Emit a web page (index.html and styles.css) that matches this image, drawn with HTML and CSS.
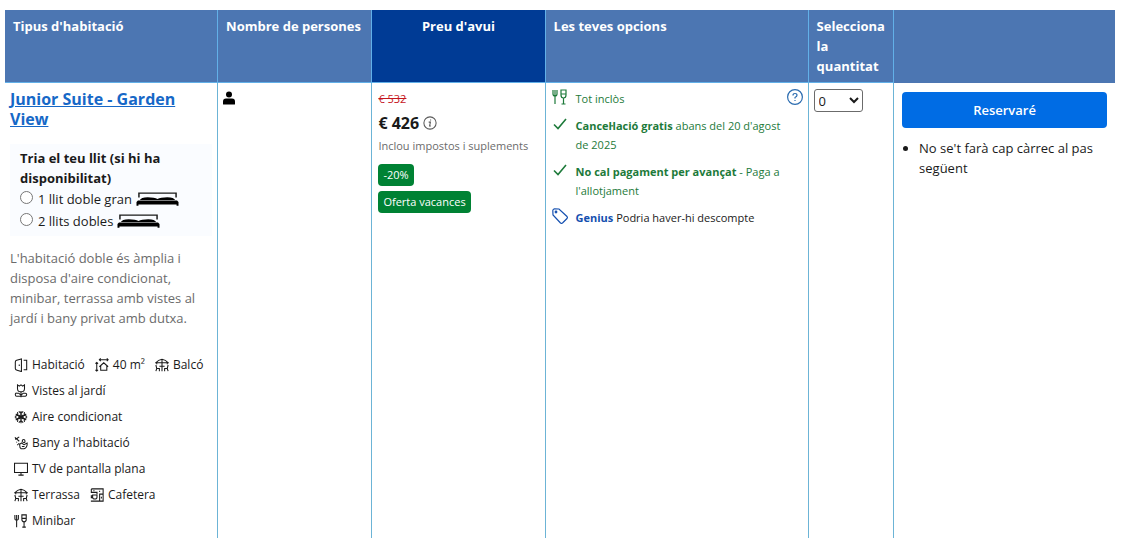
FILE: index.html
```html
<!DOCTYPE html>
<html lang="ca">
<head>
    <meta charset="UTF-8">
    <meta name="viewport" content="width=device-width, initial-scale=1.0">
    <title>Disponibilitat</title>
    <link rel="stylesheet" href="styles.css">
</head>
<body>
    <svg class="sprite" aria-hidden="true">
        <symbol id="person" viewBox="0 0 12 14">
            <circle cx="6" cy="3.5" r="3"/>
            <path d="M0 13v-2.500q0-3 3-3h6q3 0 3 3V13q0 .5-.5.5h-11Q0 13.500 0 13z"/>
        </symbol>
        <symbol id="bed" viewBox="0 0 44 16">
            <path d="M3 6.500V2h38v4.500" fill="none" stroke="currentColor" stroke-width="1.500"/>
            <path d="M4 9q1-2.500 8-2.800 7 0 10 1.800 3-1.800 10-1.800 7 .3 8 2.800z"/>
            <path d="M2 9.500h40l1.500 1.500v4h-2v-1.500h-39V15h-2v-4z"/>
        </symbol>
        <symbol id="door" viewBox="0 0 16 16">
            <path d="M8.500 1v14.500l-5-1.500Q1.500 13.500 1.500 12V4.500Q1.500 3 3 2.500zM11 2.500h3.500v11H11M6 7.500v1.500"/>
        </symbol>
        <symbol id="size" viewBox="0 0 16 16">
            <path d="M5 2h10M6.500.5L5 2l1.500 1.500M13.500.5L15 2l-1.500 1.500M2 5v10M.5 6.500L2 5l1.500 1.500M.5 13.500L2 15l1.500-1.500M5 10l5-4.500 5 4.500M6.500 9v5h7V9"/>
        </symbol>
        <symbol id="terrace" viewBox="0 0 16 16">
            <path d="M.8 5.500Q4 2 8 1.500q4 .5 7.200 4zM2 5.500V7M14 5.500V7M8 1v14M5 9.500h6M1 8l1 4h3v3M2 12l-1 3M15 8l-1 4h-3v3M14 12l1 3"/>
        </symbol>
        <symbol id="flower" viewBox="0 0 16 16">
            <path d="M4 1l2 1.500L8 1l2 1.500L12 1v4.500Q12 9 8 9T4 5.500zM8 9v6M3 10.500h2.500L8 13l2.500-2.500H13q1.500 0 1.500 1.500T13 14H3q-1.500 0-1.500-2T3 10.500z"/>
        </symbol>
        <symbol id="snow" viewBox="0 0 16 16">
            <path d="M8 1v14M2 4.500l12 7M14 4.500l-12 7M5.500 1.500L8 4l2.500-2.500M5.500 14.500L8 12l2.500 2.500M1 7.500L4.500 6 4 2.500M15 7.500L11.500 6l.5-3.500M1 8.500L4.500 10 4 13.500M15 8.500L11.500 10l.5 3.500M8 5.500l2.500 1.200v2.600L8 10.500 5.500 9.300V6.700z"/>
        </symbol>
        <symbol id="bath" viewBox="0 0 16 16">
            <path d="M1 1.500l5 4.500M6 1L1.500 4M3 6.500v1M5.500 8v2M4 9.500v1M6.500 10.500q0-2 2-2.500l3 2 3.500-2q.5 5-3.500 6.500H8q-1.500-1-1.500-4zM9.500 7.500V5.500q0-1.500 1.500-1.500t1.500 1.500V7q-1 1-2 0M9 12h3"/>
        </symbol>
        <symbol id="tv" viewBox="0 0 16 16">
            <path d="M.6 1.500h14.800v10.500H.6zM5 15h6M8 12v3"/>
        </symbol>
        <symbol id="coffee" viewBox="0 0 16 16">
            <path d="M1.500 1H15v14H1M11 15V7h4M1.500 1v4H8v2M4 3h1M3 8h5v2.500Q8 12.500 5.500 12.500T3 10.500zM3 9H1.500v2H3M11 3v1.500M13 10v2"/>
        </symbol>
        <symbol id="food" viewBox="0 0 16 16">
            <path d="M1 1v4q0 2 2 2t2-2V1M3 1v14M9 1h5v5q0 3-2.500 3T9 6zM9 5h5M11.500 9v6M9.500 15h4"/>
        </symbol>
        <symbol id="check" viewBox="0 0 16 16">
            <path d="M2 8.500L6 12.500 14 3"/>
        </symbol>
        <symbol id="tag" viewBox="0 0 16 16">
            <path d="M.8 2.500Q1 1 2.500.8L7 1l8 7.500q.8 1 0 2L10.500 15q-1 .8-2 0L1 7z"/>
            <circle cx="4" cy="4" r=".8"/>
        </symbol>
        <symbol id="info" viewBox="0 0 16 16">
            <circle cx="8" cy="8" r="7"/>
            <path d="M6.500 7h2l-1 4.500h1.500M8.700 4v1"/>
        </symbol>
        <symbol id="help" viewBox="0 0 16 16">
            <circle cx="8" cy="8" r="7.400"/>
            <path d="M6 6.500Q6 4.500 8 4.500t2 1.800Q10 7.500 8 8.500V9.500M8 11v1"/>
        </symbol>
    </svg>

    <table class="rooms">
        <colgroup>
            <col class="col-type">
            <col class="col-people">
            <col class="col-price">
            <col class="col-options">
            <col class="col-amount">
            <col class="col-book">
        </colgroup>
        <thead>
            <tr>
                <th>Tipus d'habitació</th>
                <th>Nombre de persones</th>
                <th class="today">Preu d'avui</th>
                <th>Les teves opcions</th>
                <th><label for="amount">Selecciona la quantitat</label></th>
                <th></th>
            </tr>
        </thead>
        <tbody>
            <tr>
                <td>
                    <a class="room-name" href="#">Junior Suite - Garden View</a>
                    <fieldset class="beds">
                        <legend>Tria el teu llit (si hi ha disponibilitat)</legend>
                        <label class="bed"><input type="radio" name="bed">1 llit doble gran <svg class="bed-icon"><use href="#bed"/></svg></label>
                        <label class="bed"><input type="radio" name="bed">2 llits dobles <svg class="bed-icon"><use href="#bed"/></svg></label>
                    </fieldset>
                    <p class="description">L'habitació doble és àmplia i disposa d'aire condicionat, minibar, terrassa amb vistes al jardí i bany privat amb dutxa.</p>
                    <ul class="facilities">
                        <li><svg class="icon"><use href="#door"/></svg>Habitació</li>
                        <li><svg class="icon"><use href="#size"/></svg>40 m²</li>
                        <li><svg class="icon"><use href="#terrace"/></svg>Balcó</li>
                        <li><svg class="icon"><use href="#flower"/></svg>Vistes al jardí</li>
                        <li><svg class="icon"><use href="#snow"/></svg>Aire condicionat</li>
                        <li><svg class="icon"><use href="#bath"/></svg>Bany a l'habitació</li>
                        <li><svg class="icon"><use href="#tv"/></svg>TV de pantalla plana</li>
                        <li><svg class="icon"><use href="#terrace"/></svg>Terrassa</li>
                        <li><svg class="icon"><use href="#coffee"/></svg>Cafetera</li>
                        <li><svg class="icon"><use href="#food"/></svg>Minibar</li>
                    </ul>
                </td>
                <td><svg class="person"><use href="#person"/></svg></td>
                <td>
                    <div class="price-box">
                        <del class="old-price">€ 532</del>
                        <div class="price">€ 426 <svg class="icon info"><use href="#info"/></svg></div>
                        <div class="taxes">Inclou impostos i suplements</div>
                        <div class="badges">
                            <span class="badge">-20%</span>
                            <span class="badge">Oferta vacances</span>
                        </div>
                    </div>
                </td>
                <td>
                    <ul class="options">
                        <li><svg class="icon"><use href="#food"/></svg><span>Tot inclòs</span><svg class="icon help"><use href="#help"/></svg></li>
                        <li><svg class="icon check"><use href="#check"/></svg><span><b>Cancel·lació gratis</b> abans del 20 d'agost de 2025</span></li>
                        <li><svg class="icon check"><use href="#check"/></svg><span><b>No cal pagament per avançat</b> - Paga a l'allotjament</span></li>
                        <li class="genius"><svg class="icon"><use href="#tag"/></svg><span><b>Genius</b> Podria haver-hi descompte</span></li>
                    </ul>
                </td>
                <td>
                    <select class="amount" id="amount">
                        <option>0</option>
                        <option>1</option>
                        <option>2</option>
                    </select>
                </td>
                <td>
                    <div class="book">
                        <button class="book-button" type="button">Reservaré</button>
                        <ul class="notes">
                            <li>No se't farà cap càrrec al pas següent</li>
                        </ul>
                    </div>
                </td>
            </tr>
        </tbody>
    </table>
</body>
</html>
```
FILE: styles.css
```css
* {
    box-sizing: border-box;
}

body {
    margin: 0;
    padding: 10px 11px 0 5px;
    background-color: white;
    color: #1a1a1a;
    font-family: "Open Sans", "Noto Sans", sans-serif;
    font-size: 13px;
    line-height: 20px;
    font-variant-ligatures: none;
}

ul {
    margin: 0;
    padding: 0;
    list-style: none;
}

.sprite {
    display: none;
}

.icon {
    flex: none;
    width: 14px;
    height: 14px;
    fill: none;
    stroke: currentColor;
    stroke-width: 1.2;
}

/* Table */
.rooms {
    width: 100%;
    height: calc(100vh - 10px);
    table-layout: fixed;
    border-collapse: separate;
    border-spacing: 0;
}

.col-type { width: 19.2%; }
.col-people { width: 13.9%; }
.col-price { width: 15.6%; }
.col-options { width: 23.7%; }
.col-amount { width: 7.7%; }
.col-book { width: 19.9%; }

th {
    height: 73px;
    padding: 6px 8px;
    background-color: #4c76b2;
    border-right: 1px solid #62b0e8;
    border-bottom: 1px solid #62b0e8;
    color: white;
    font-weight: bold;
    text-align: left;
    vertical-align: top;
}

th:last-child,
td:last-child {
    border-right: none;
}

th:last-child {
    border-bottom-color: #4c76b2;
}

.today {
    background-color: #003b95;
    text-align: center;
}

td {
    height: 100%;
    padding: 6px 5px 0;
    border-right: 1px solid #6cb4d6;
    vertical-align: top;
}

/* Room type */
.room-name {
    display: block;
    margin-bottom: 15px;
    color: #1668c7;
    font-size: 16px;
    font-weight: bold;
}

.beds {
    margin: 0 0 12px;
    padding: 4px 10px;
    border: none;
    background-color: #fafcff;
}

.beds legend {
    float: left;
    padding: 0;
    font-weight: bold;
}

.bed {
    display: flex;
    clear: both;
    align-items: center;
    gap: 4px;
    height: 22px;
}

.bed input {
    width: 13px;
    height: 13px;
    margin: 0 1px 4px 0;
}

.bed-icon {
    width: 43px;
    height: 16px;
}

.description {
    margin: 0 0 24px;
    color: #6b6b6b;
}

.facilities {
    display: flex;
    flex-wrap: wrap;
    column-gap: 10px;
    padding: 0 0 0 4px;
    font-size: 12px;
    line-height: 26px;
}

.facilities li {
    display: flex;
    align-items: center;
    gap: 4px;
}

.person {
    display: block;
    width: 12px;
    height: 14px;
    margin-top: 2px;
}

/* Price */
.price-box {
    padding: 0 0 0 1px;
    font-size: 11px;
}

.old-price {
    display: block;
    color: #c5161d;
}

.price {
    display: flex;
    align-items: center;
    gap: 4px;
    height: 28px;
    font-size: 16px;
    font-weight: bold;
}

.info {
    color: #595959;
}

.taxes {
    margin-bottom: 9px;
    color: #6b6b6b;
    line-height: 18px;
    white-space: nowrap;
}

.badges {
    display: flex;
    flex-direction: column;
    align-items: flex-start;
    gap: 5px;
}

.badge {
    padding: 1px 5px;
    border-radius: 4px;
    background-color: #008234;
    color: white;
}

/* Options */
.options {
    display: flex;
    flex-direction: column;
    gap: 8px;
    padding: 0 0 0 1px;
    color: #1d7a3a;
    font-size: 11px;
    line-height: 19px;
}

.options li {
    display: flex;
    gap: 8px;
}

.options span {
    padding-right: 12px;
}

.options .icon {
    width: 16px;
    height: 16px;
}

.options .check {
    stroke-width: 1.6;
}

.options .help {
    margin-left: auto;
    color: #2b6cb0;
}

.options .genius {
    color: #1a1a1a;
}

.genius b,
.genius .icon {
    color: #1550b0;
}

/* Booking */
.amount {
    width: 49px;
    height: 23px;
    border: 1px solid #6b6b6b;
    border-radius: 3px;
    background-color: white;
    color: #1a1a1a;
    font-family: inherit;
    font-size: 13px;
}

.book {
    padding: 3px 3px 0;
}

.book-button {
    width: 100%;
    height: 36px;
    margin-bottom: 10px;
    border: none;
    border-radius: 4px;
    background-color: #006ce4;
    color: white;
    font-family: inherit;
    font-size: 13px;
    font-weight: 600;
    cursor: pointer;
}

.notes {
    padding-left: 17px;
    list-style: disc;
}
```
